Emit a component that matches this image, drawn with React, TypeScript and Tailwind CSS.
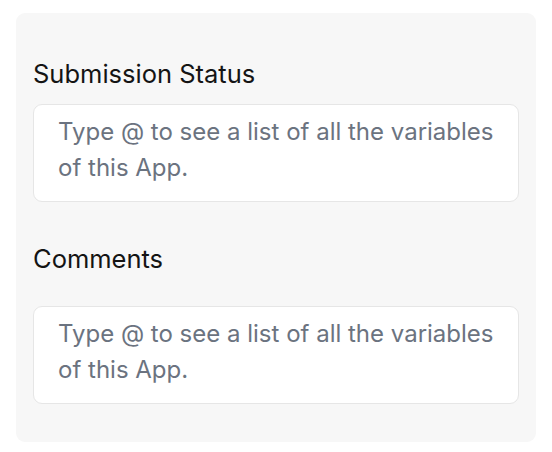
import React from 'react';

const fields = ['Submission Status', 'Comments'];

const Field: React.FC<{ label: string; first?: boolean }> = ({ label, first }) => {
  return (
    <div className={first ? 'pt-[45px]' : 'pt-[41px]'}>
      <label className="block text-[25.5px] leading-[32px] text-[#141414]">{label}</label>
      <textarea
        readOnly
        placeholder="Type @ to see a list of all the variables of this App."
        className={`block w-full h-[98px] resize-none rounded-[9px] border-[1.5px] border-[#e6e6e6] bg-white px-[24px] pt-[8.5px] text-[24px] leading-[36px] text-[#222] placeholder:text-[#6b7380] outline-none ${
          first ? 'mt-[14px]' : 'mt-[31px]'
        }`}
      />
    </div>
  );
};

const App: React.FC = () => {
  return (
    <div className="min-h-screen bg-white px-4 pt-[13px] font-['Inter',sans-serif]">
      <div className="rounded-[9px] bg-[#f7f7f7] px-[17px] pb-[38px]">
        {fields.map((f, i) => (
          <Field key={f} label={f} first={i === 0} />
        ))}
      </div>
    </div>
  );
};

export default App;
